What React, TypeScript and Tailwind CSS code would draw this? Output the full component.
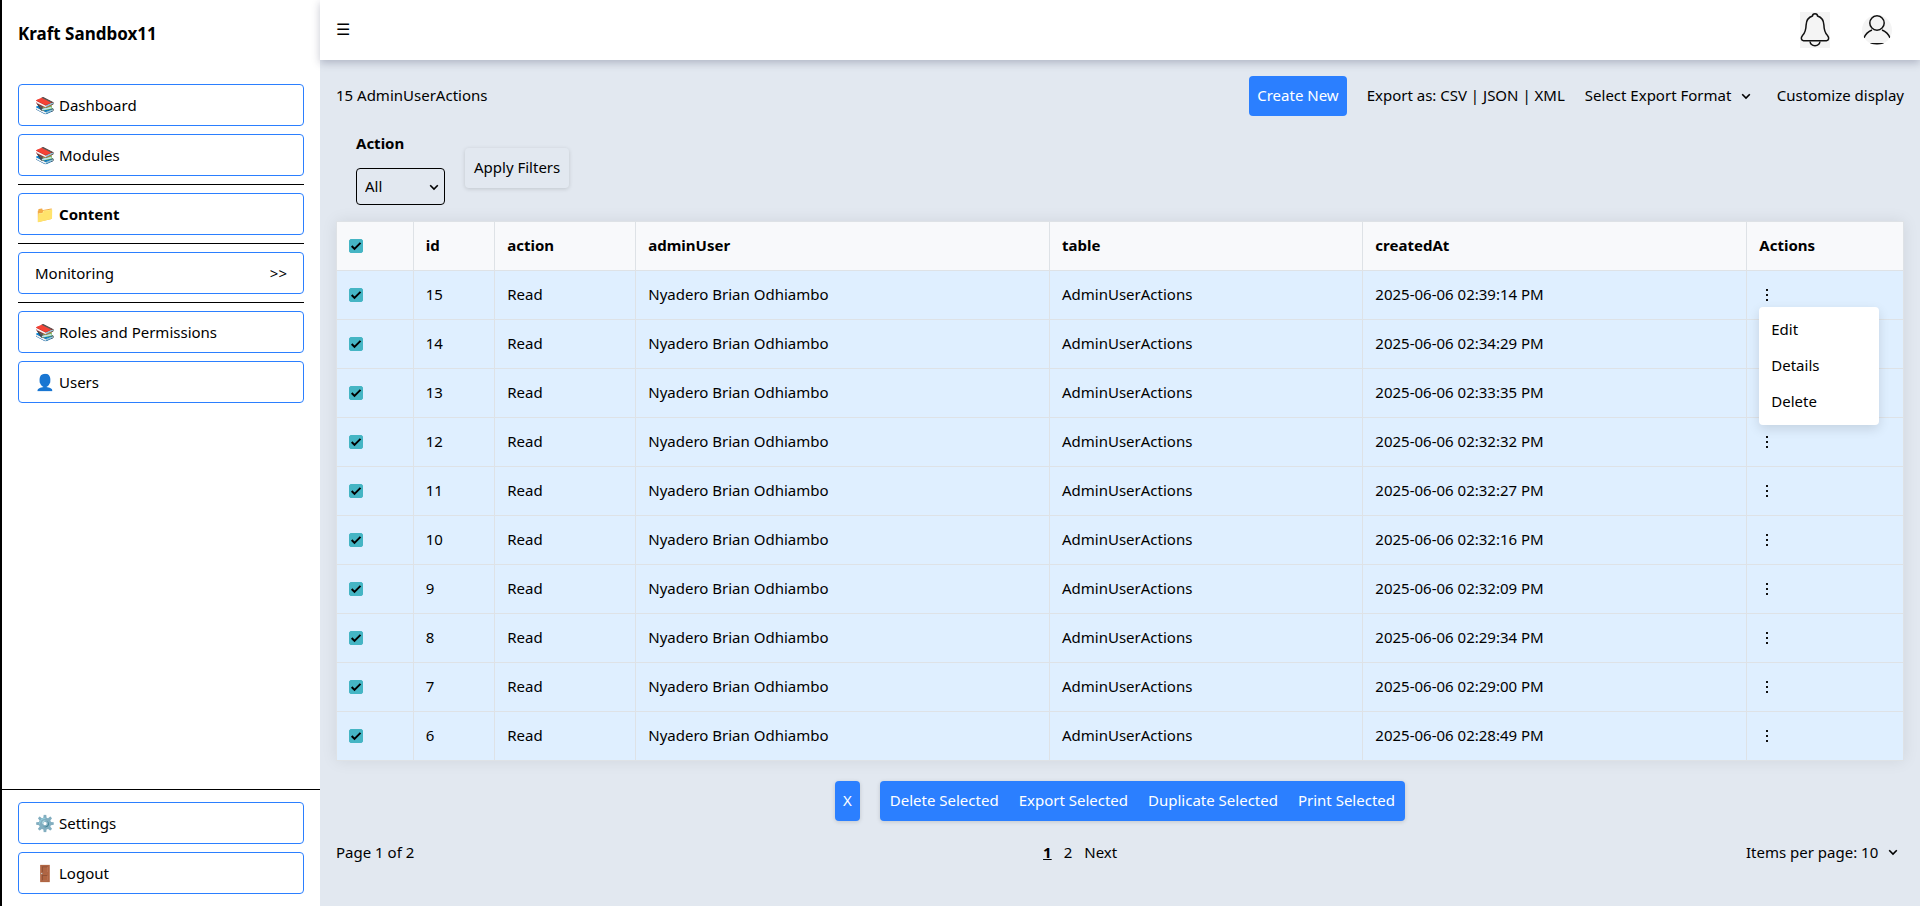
import { ReactNode, SelectHTMLAttributes, useState } from "react";
import clsx from "clsx";

interface UserAction {
  id: number;
  createdAt: string;
}

interface NavItemProps {
  icon?: string;
  label: string;
  bold?: boolean;
  suffix?: string;
}

interface CheckboxProps {
  label: string;
  checked: boolean;
  onChange: () => void;
}

const ACTIONS: UserAction[] = [
  { id: 15, createdAt: "2025-06-06 02:39:14 PM" },
  { id: 14, createdAt: "2025-06-06 02:34:29 PM" },
  { id: 13, createdAt: "2025-06-06 02:33:35 PM" },
  { id: 12, createdAt: "2025-06-06 02:32:32 PM" },
  { id: 11, createdAt: "2025-06-06 02:32:27 PM" },
  { id: 10, createdAt: "2025-06-06 02:32:16 PM" },
  { id: 9, createdAt: "2025-06-06 02:32:09 PM" },
  { id: 8, createdAt: "2025-06-06 02:29:34 PM" },
  { id: 7, createdAt: "2025-06-06 02:29:00 PM" },
  { id: 6, createdAt: "2025-06-06 02:28:49 PM" }
];

const COLUMNS = ["id", "action", "adminUser", "table", "createdAt", "Actions"];

const BULK_ACTIONS = [
  "Delete Selected",
  "Export Selected",
  "Duplicate Selected",
  "Print Selected"
];

const NavItem = ({ icon, label, bold, suffix }: NavItemProps) => (
  <a
    href="#"
    className="flex items-center rounded border border-[#2b7fff] px-4 py-2"
  >
    {icon && <span className="mr-1 text-base">{icon}</span>}
    <span className={clsx(bold && "font-bold")}>{label}</span>
    {suffix && <span className="ml-auto">{suffix}</span>}
  </a>
);

const Divider = () => <hr className="border-black" />;

const Sidebar = () => (
  <aside className="flex w-80 shrink-0 flex-col border-l-2 border-black bg-white">
    <h1 className="px-4 pt-5 text-[17px] leading-7 font-bold">
      Kraft Sandbox11
    </h1>
    <nav className="mt-9 flex grow flex-col gap-2 px-4">
      <NavItem icon="📚" label="Dashboard" />
      <NavItem icon="📚" label="Modules" />
      <Divider />
      <NavItem icon="📁" label="Content" bold />
      <Divider />
      <NavItem label="Monitoring" suffix=">>" />
      <Divider />
      <NavItem icon="📚" label="Roles and Permissions" />
      <NavItem icon="👤" label="Users" />
    </nav>
    <div className="flex flex-col gap-2 border-t border-black px-4 py-3">
      <NavItem icon="⚙️" label="Settings" />
      <NavItem icon="🚪" label="Logout" />
    </div>
  </aside>
);

const BellIcon = () => (
  <svg
    viewBox="0 0 30 36"
    className="h-9 w-[30px] bg-[#f4f4f4]"
    fill="none"
    stroke="#111"
    strokeWidth="1.5"
    strokeLinejoin="round"
  >
    <path d="M12.5 4C12.5 1 17.5 1 17.5 4C21.5 5.2 23.7 8.5 23.9 13C24 18 24.5 20.5 27.5 23.5C29.5 25.8 28.8 28.7 26.5 28.7H3.5C1.2 28.7 .5 25.8 2.5 23.5C5.5 20.5 6 18 6.1 13C6.3 8.5 8.5 5.2 12.5 4Z" />
    <path d="M10 29.5C10.8 35 19.2 35 20 29.5" />
  </svg>
);

const UserIcon = () => (
  <svg
    viewBox="0 0 30 30"
    className="size-[30px] rounded-full bg-[#f4f4f4]"
    fill="none"
    stroke="#111"
    strokeWidth="1.5"
  >
    <circle cx="15" cy="8" r="7.2" />
    <path d="M2 23C3.5 19 6.5 16.3 10 15M20 15C23.5 16.3 26.5 19 28 23" />
    <path d="M8 28.8H22" />
  </svg>
);

const KebabIcon = () => (
  <svg viewBox="0 0 16 16" className="size-4" fill="#111">
    <path d="M7 2h2v2H7zM7 7h2v2H7zM7 12h2v2H7z" />
  </svg>
);

const Checkbox = ({ label, checked, onChange }: CheckboxProps) => (
  <span className="relative block size-3.5">
    <input
      type="checkbox"
      aria-label={label}
      className="block size-3.5 appearance-none rounded-[2px] border border-gray-500 bg-white checked:border-[#45b5c4] checked:bg-[#45b5c4]"
      checked={checked}
      onChange={onChange}
    />
    {checked && (
      <svg
        viewBox="0 0 14 14"
        className="pointer-events-none absolute inset-0"
        fill="none"
        stroke="black"
        strokeWidth="2"
      >
        <path d="M2.700 7L5.500 9.900L11.500 3.900" />
      </svg>
    )}
  </span>
);

const Select = ({
  className,
  children,
  ...props
}: SelectHTMLAttributes<HTMLSelectElement> & { children: ReactNode }) => (
  <span className="relative flex items-center">
    <select className={clsx("appearance-none bg-transparent", className)} {...props}>
      {children}
    </select>
    <svg
      viewBox="0 0 10 10"
      className="pointer-events-none absolute right-1.5 size-2.5"
      fill="none"
      stroke="black"
      strokeWidth="1.6"
    >
      <path d="M1.200 3.200L5 7L8.800 3.200" />
    </svg>
  </span>
);

const Header = () => (
  <header className="relative flex h-15 items-center justify-between bg-white px-4 shadow-[0_3px_8px_rgba(30,35,70,0.25)]">
    <button aria-label="Toggle menu" className="pb-0.5 text-base">
      ☰
    </button>
    <div className="flex items-center gap-8 pr-3">
      <button aria-label="Notifications">
        <BellIcon />
      </button>
      <button aria-label="Account">
        <UserIcon />
      </button>
    </div>
  </header>
);

const RowMenu = () => (
  <div className="absolute top-9 left-3 z-10 flex w-[120px] flex-col rounded bg-white pt-1 pb-1.5 shadow-[0_4px_12px_rgba(0,0,0,0.12)]">
    {["Edit", "Details", "Delete"].map(item => (
      <button key={item} className="px-3 py-1.5 text-left">
        {item}
      </button>
    ))}
  </div>
);

export default function App() {
  const [selected, setSelected] = useState(ACTIONS.map(action => action.id));
  const [openMenu, setOpenMenu] = useState<number | null>(15);

  const toggleRow = (id: number) => {
    setSelected(prev =>
      prev.includes(id) ? prev.filter(row => row !== id) : [...prev, id]
    );
  };

  const toggleAll = () => {
    setSelected(prev =>
      prev.length === ACTIONS.length ? [] : ACTIONS.map(action => action.id)
    );
  };

  return (
    <div className="flex min-h-screen bg-slate-200 font-['Noto_Sans',sans-serif] text-[15px] leading-6 text-black">
      <Sidebar />
      <div className="flex min-w-0 grow flex-col">
        <Header />
        <main className="flex flex-col px-4 pt-4">
          <div className="flex items-center justify-between">
            <p className="pb-0.5">15 AdminUserActions</p>
            <div className="flex items-center gap-5">
              <button className="rounded bg-[#2b7fff] px-2 pt-[7px] pb-[9px] text-white">
                Create New
              </button>
              <p className="pb-0.5">
                Export as: <a href="#">CSV</a> | <a href="#">JSON</a> |{" "}
                <a href="#">XML</a>
              </p>
              <Select aria-label="Export format" className="w-[172px] pb-0.5">
                <option>Select Export Format</option>
              </Select>
              <button className="pb-0.5">Customize display</button>
            </div>
          </div>

          <form
            className="flex items-center gap-5 px-5 pt-[15px] pb-4"
            onSubmit={e => e.preventDefault()}
          >
            <div className="flex flex-col gap-[13px]">
              <label htmlFor="action-filter" className="font-bold">
                Action
              </label>
              <Select
                id="action-filter"
                className="h-[37px] w-[89px] rounded border border-black px-2 pb-0.5"
              >
                <option>All</option>
                <option>Read</option>
                <option>Create</option>
              </Select>
            </div>
            <button className="rounded px-[9px] pt-[7px] pb-[9px] shadow-[0_1px_4px_rgba(0,0,0,0.15)]">
              Apply Filters
            </button>
          </form>

          <table className="w-full table-fixed border-collapse bg-[#dfefff] shadow-[0_0_15px_rgba(0,0,0,0.08)]">
            <colgroup>
              <col className="w-[4.9%]" />
              <col className="w-[5.2%]" />
              <col className="w-[9%]" />
              <col className="w-[26.4%]" />
              <col className="w-[20%]" />
              <col className="w-[24.5%]" />
              <col className="w-[10%]" />
            </colgroup>
            <thead>
              <tr className="bg-[#f8f9fb] text-left">
                <th className="h-[49px] border border-[#dee2e6] px-3">
                  <Checkbox
                    label="Select all rows"
                    checked={selected.length === ACTIONS.length}
                    onChange={toggleAll}
                  />
                </th>
                {COLUMNS.map(column => (
                  <th
                    key={column}
                    className="border border-[#dee2e6] px-3 pb-0.5"
                  >
                    {column}
                  </th>
                ))}
              </tr>
            </thead>
            <tbody>
              {ACTIONS.map(({ id, createdAt }) => (
                <tr key={id}>
                  <td className="h-[49px] border border-[#dee2e6] px-3">
                    <Checkbox
                      label={`Select row ${id}`}
                      checked={selected.includes(id)}
                      onChange={() => toggleRow(id)}
                    />
                  </td>
                  <td className="border border-[#dee2e6] px-3 pb-0.5">{id}</td>
                  <td className="border border-[#dee2e6] px-3 pb-0.5">Read</td>
                  <td className="border border-[#dee2e6] px-3 pb-0.5">
                    Nyadero Brian Odhiambo
                  </td>
                  <td className="border border-[#dee2e6] px-3 pb-0.5">
                    AdminUserActions
                  </td>
                  <td className="border border-[#dee2e6] px-3 pb-0.5">
                    {createdAt}
                  </td>
                  <td className="relative border border-[#dee2e6] px-3">
                    <button
                      aria-label="Row actions"
                      className="block"
                      onClick={() => setOpenMenu(openMenu === id ? null : id)}
                    >
                      <KebabIcon />
                    </button>
                    {openMenu === id && <RowMenu />}
                  </td>
                </tr>
              ))}
            </tbody>
          </table>

          <div className="mt-5 flex justify-center gap-5 text-white">
            <button
              aria-label="Clear selection"
              className="rounded bg-[#2b7fff] px-2 pt-[7px] pb-[9px] shadow-[0_1px_4px_rgba(0,0,0,0.15)]"
            >
              X
            </button>
            <div className="flex rounded bg-[#2b7fff] shadow-[0_1px_4px_rgba(0,0,0,0.15)]">
              {BULK_ACTIONS.map(action => (
                <button key={action} className="px-2.5 pt-[7px] pb-[9px]">
                  {action}
                </button>
              ))}
            </div>
          </div>

          <div className="mt-[19px] flex items-center justify-between pb-10">
            <p>Page 1 of 2</p>
            <nav className="flex gap-3" aria-label="Pagination">
              <a href="#" className="font-bold underline">
                1
              </a>
              <a href="#">2</a>
              <a href="#">Next</a>
            </nav>
            <Select aria-label="Items per page" className="w-[158px]">
              <option>Items per page: 10</option>
              <option>Items per page: 20</option>
              <option>Items per page: 100</option>
            </Select>
          </div>
        </main>
      </div>
    </div>
  );
}
